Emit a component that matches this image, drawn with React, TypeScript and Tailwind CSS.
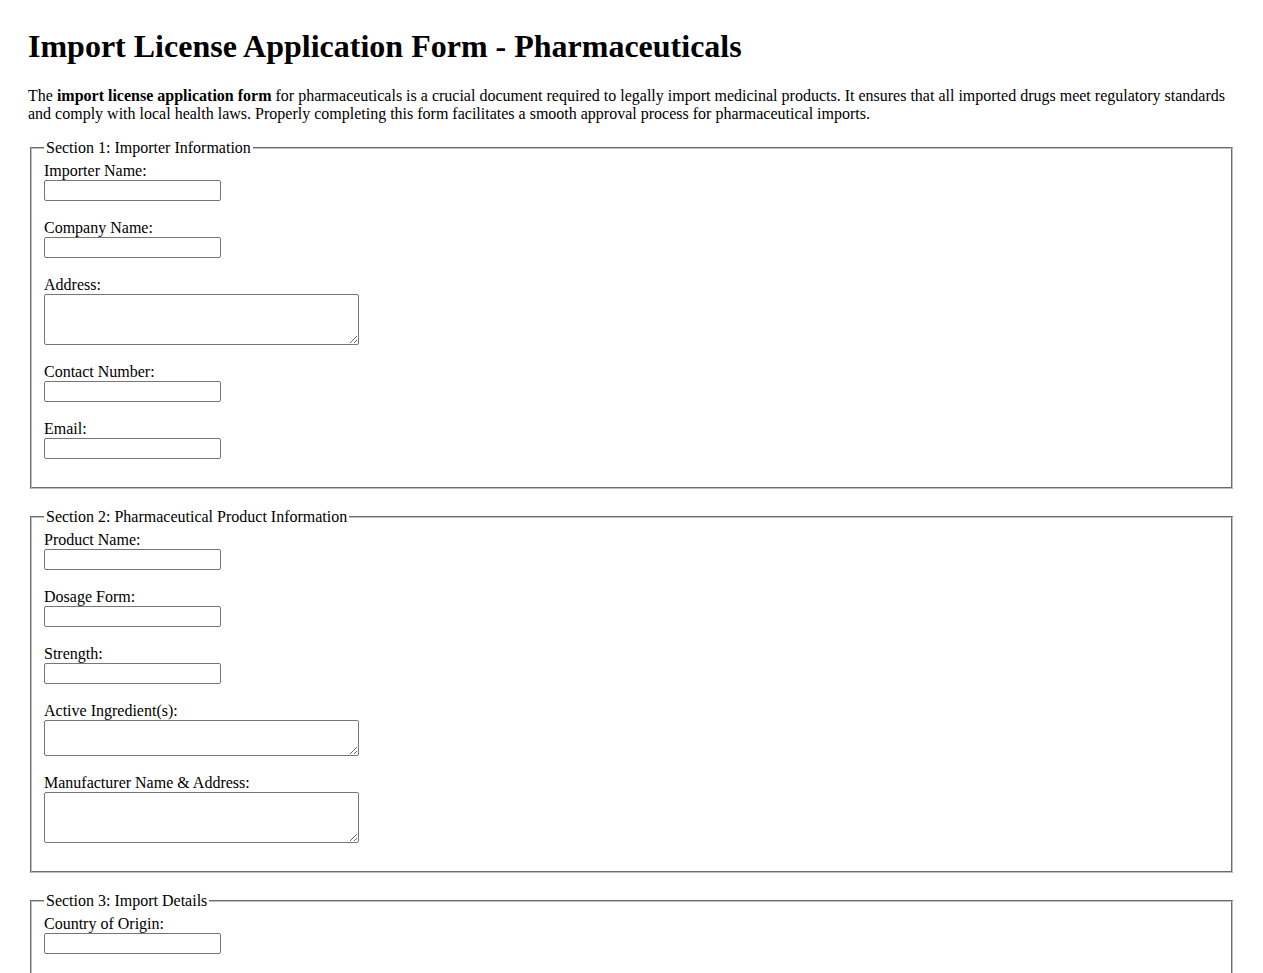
type Field = { label: string; kind?: "input" | "area"; rows?: "sm" | "lg" };

const sections: { title: string; fields: Field[] }[] = [
  {
    title: "Section 1: Importer Information",
    fields: [
      { label: "Importer Name:" },
      { label: "Company Name:" },
      { label: "Address:", kind: "area", rows: "lg" },
      { label: "Contact Number:" },
      { label: "Email:" },
    ],
  },
  {
    title: "Section 2: Pharmaceutical Product Information",
    fields: [
      { label: "Product Name:" },
      { label: "Dosage Form:" },
      { label: "Strength:" },
      { label: "Active Ingredient(s):", kind: "area", rows: "sm" },
      { label: "Manufacturer Name & Address:", kind: "area", rows: "lg" },
    ],
  },
  {
    title: "Section 3: Import Details",
    fields: [{ label: "Country of Origin:" }],
  },
];

function FormField({ field }: { field: Field }) {
  return (
    <div className="mb-[18px] flex flex-col items-start">
      <label className="h-[18px] leading-[18px]">{field.label}</label>
      {field.kind === "area" ? (
        <textarea
          className={
            field.rows === "sm"
              ? "h-[36px] w-[315px] rounded-[2px] border border-[#767676] bg-white px-[2px] py-[2px] text-[13.33px]"
              : "h-[51px] w-[315px] rounded-[2px] border border-[#767676] bg-white px-[2px] py-[2px] text-[13.33px]"
          }
        />
      ) : (
        <input
          type="text"
          className="h-[21px] w-[177px] rounded-[2px] border border-[#767676] bg-white px-[2px] py-[1px] text-[13.33px]"
        />
      )}
    </div>
  );
}

export default function App() {
  return (
    <div className="min-h-screen bg-white px-[28px] pt-[28px] pb-10 font-['Liberation_Serif','Times_New_Roman',serif] text-[16px] leading-[18px] text-black">
      <h1 className="mb-[22px] text-[32px] leading-[37px] font-bold">
        Import License Application Form - Pharmaceuticals
      </h1>
      <p className="mb-[16px] leading-[18px]">
        The <strong className="font-bold">import license application form</strong> for pharmaceuticals is a crucial
        document required to legally import medicinal products. It ensures that all imported drugs meet regulatory
        standards and comply with local health laws. Properly completing this form facilitates a smooth approval
        process for pharmaceutical imports.
      </p>

      {sections.map((s) => (
        <fieldset
          key={s.title}
          className="mx-[2px] mb-[19px] border-2 border-[#c0c0c0] px-[12px] pt-[5px] pb-[10px] [border-style:groove]"
        >
          <legend className="px-[2px] leading-[18px]">{s.title}</legend>
          {s.fields.map((f) => (
            <FormField key={f.label} field={f} />
          ))}
        </fieldset>
      ))}
    </div>
  );
}
